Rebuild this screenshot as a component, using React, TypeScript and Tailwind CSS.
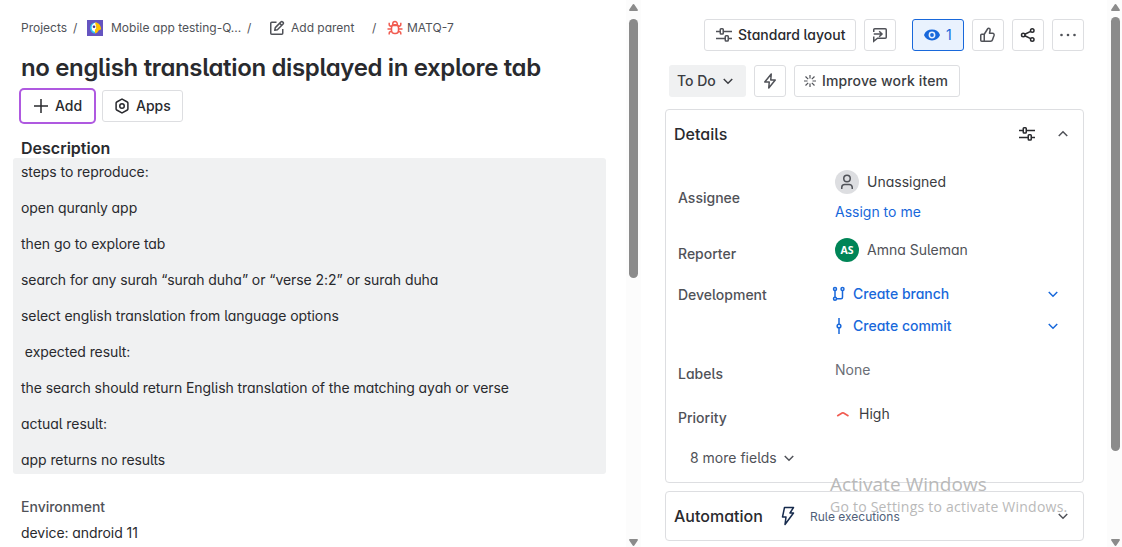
import React from "react";

type IconProps = { className?: string };

const Svg = ({ className = "", children, box = "0 0 16 16" }: IconProps & { children: React.ReactNode; box?: string }) => (
  <svg viewBox={box} fill="none" stroke="currentColor" strokeWidth="1.5" className={`block shrink-0 ${className}`}>
    {children}
  </svg>
);

const Chevron = ({ className = "", up = false }: IconProps & { up?: boolean }) => (
  <Svg box="0 0 12 12" className={`size-3 ${className}`}>
    <path d={up ? "M1.750 8 6 3.750 10.250 8" : "M1.750 4 6 8.250 10.250 4"} />
  </Svg>
);

const Customize = ({ className = "" }: IconProps) => (
  <Svg className={`size-4 ${className}`}>
    <path d="M0 4.500h4M7.250 4.500H16M0 11.500h9M12.250 11.500H16" />
    <rect x="4.250" y="1.750" width="3" height="5.250" rx="0.750" />
    <rect x="9.250" y="8.750" width="3" height="5.250" rx="0.750" />
  </Svg>
);

const Bolt = ({ className = "" }: IconProps) => (
  <Svg className={`size-4 ${className}`}>
    <path d="M9.250 1 2.750 9h4.500L6.750 15l6.500-8h-4.500z" strokeLinejoin="round" />
  </Svg>
);

const ScrollBar = ({ thumb, className = "" }: { thumb: string; className?: string }) => (
  <div className={`flex h-full w-[15px] shrink-0 flex-col items-center bg-[#fcfcfc] pt-1 pb-px ${className}`}>
    <svg viewBox="0 0 9 7" className="block h-[7px] w-[9px]" fill="#8b8b8b"><path d="M4.500 0C5 0 5.200.3 5.500.8L8.700 5.600C9.200 6.400 9 7 8 7H1C0 7-.2 6.400.3 5.600L3.500.8C3.800.3 4 0 4.500 0z" /></svg>
    <div className={`w-[9px] rounded-full bg-[#8b8b8b] ${thumb}`} />
    <svg viewBox="0 0 9 7" className="mt-auto block h-[7px] w-[9px]" fill="#8b8b8b"><path d="M4.500 7C4 7 3.800 6.700 3.500 6.200L.3 1.400C-.2.6 0 0 1 0h7c1 0 1.200.6.7 1.400L5.500 6.200C5.200 6.700 5 7 4.500 7z" /></svg>
  </div>
);

const steps = [
  "steps to reproduce:",
  "open quranly app",
  "then go to explore tab",
  "search for any surah “surah duha” or “verse 2:2” or surah duha",
  "select english translation from language options",
  "\u00a0expected result:",
  "the search should return English translation of the matching ayah or verse",
  "actual result:",
  "app returns no results",
];

const Btn = ({ className = "", border = "border-[#dddee1]", children }: { className?: string; border?: string; children: React.ReactNode }) => (
  <button className={`flex h-8 shrink-0 items-center rounded-[3px] border text-left text-sm font-medium whitespace-nowrap ${border} ${className}`}>
    {children}
  </button>
);

const Field = ({ label, className = "", labelClass = "", children }: { label: string; className?: string; labelClass?: string; children: React.ReactNode }) => (
  <div className={`flex ${className}`}>
    <div className={`w-[157px] shrink-0 font-[450] text-[#505258] ${labelClass}`}>{label}</div>
    <div className="min-w-0 flex-1">{children}</div>
  </div>
);

export default function App() {
  return (
    <div className="relative flex h-[547px] w-[1122px] overflow-hidden bg-white font-['Inter',sans-serif] text-sm leading-5 text-[#292a2e] [font-feature-settings:'cv11','cv05']">
      <main className="flex w-[626px] shrink-0 flex-col pt-[18px]">
        <nav className="flex h-5 items-center pl-[21px] text-xs whitespace-nowrap text-[#505258]">
          <span className="w-[52px]">Projects</span>
          <span className="w-[14px]">/</span>
          <svg viewBox="0 0 16 16" className="block size-4">
            <rect width="16" height="16" fill="#6554c0" />
            <path d="M8.500 2.500a5.500 5.500 0 1 0 0 11z" fill="#2cc7ee" />
            <path d="M4.600 7.800c0-3 2-5 4.900-5v9.400c-3 0-4.900-1.600-4.900-4.400z" fill="#fff" />
            <path d="M8 2.500c3.500 0 5.800 2.500 6.200 6.800L11.500 10.500c-.6 1.600-1.700 2.500-3.500 3V9.500L9.500 8z" fill="#ffc400" />
            <circle cx="7" cy="6.800" r="1.300" fill="#403294" />
          </svg>
          <span className="ml-2 w-[136px]">Mobile app testing-Q...</span>
          <span className="w-[22px]">/</span>
          <Svg className="size-4">
            <path d="M7.500 2.250H2.750a1 1 0 0 0-1 1v10a1 1 0 0 0 1 1h10a1 1 0 0 0 1-1V9" />
            <path d="M5.750 10.250 6.300 7.600 12 1.900a1.100 1.100 0 0 1 1.600 0l.5.5a1.100 1.100 0 0 1 0 1.600L8.400 9.700z" strokeLinejoin="round" />
            <path d="m10.600 3.300 2.100 2.100" />
          </Svg>
          <span className="ml-[6px] w-[81px]">Add parent</span>
          <span className="w-[15px]">/</span>
          <Svg className="size-4 text-[#f15b50]">
            <rect x="4.500" y="4.750" width="7" height="8.750" rx="3" />
            <path d="M4.500 5.500h7M5.750 4.750V3.800a2.250 2.250 0 0 1 4.500 0v.95M4.500 9H.5M11.500 9h4M4.600 6.500 3.200 6a1.500 1.500 0 0 1-1-1.500V2.800M11.400 6.500l1.400-.5a1.500 1.500 0 0 0 1-1.500V2.800M4.700 11.200l-1.500.5a1.500 1.500 0 0 0-1 1.500v1.300M11.300 11.200l1.500.5a1.500 1.500 0 0 1 1 1.500v1.300" />
          </Svg>
          <span className="ml-1">MATQ-7</span>
        </nav>
        <h1 className="mt-4 pl-[21px] text-2xl leading-7 font-semibold tracking-[-0.36px] whitespace-nowrap">no english translation displayed in explore tab</h1>
        <div className="mt-2 flex gap-2 pl-[21px]">
          <Btn border="border-transparent" className="w-[73px] pl-[11px] ring-2 ring-[#af59e0]">
            <Svg className="size-4"><path d="M8 1v14M1 8h14" /></Svg>
            <span className="ml-[6px] font-[450]">Add</span>
          </Btn>
          <Btn className="w-[81px] pl-[11px]">
            <Svg className="size-4">
              <path d="M7.400 1.300a1.200 1.200 0 0 1 1.200 0l4.700 2.700c.4.200.6.600.6 1v6c0 .4-.2.800-.6 1l-4.700 2.700a1.200 1.200 0 0 1-1.200 0L2.700 12c-.4-.2-.6-.6-.6-1V5c0-.4.200-.8.600-1z" />
              <circle cx="8" cy="8" r="2.250" />
            </Svg>
            <span className="ml-[6px] font-[450]">Apps</span>
          </Btn>
        </div>
        <h2 className="mt-4 pl-[21px] text-base leading-5 font-semibold">Description</h2>
        <div className="ml-[13px] flex h-[316px] w-[593px] flex-col gap-4 rounded-[3px] bg-[#f0f1f2] px-2 pt-1 tracking-[-0.065px]">
          {steps.map((s) => <p key={s} className="whitespace-nowrap">{s}</p>)}
        </div>
        <h3 className="mt-[23px] pl-[21px] font-[450] text-[#505258]">Environment</h3>
        <p className="mt-[6px] pl-[21px] tracking-[-0.065px]">device: android 11</p>
      </main>
      <ScrollBar thumb="mt-2 h-[259px]" />
      <aside className="flex w-[466px] shrink-0 flex-col pt-[19px] pl-6">
        <div className="flex h-8 pl-[39px]">
          <Btn className="w-[152px] pl-[11px]">
            <Customize className="text-[#505258]" />
            <span className="ml-[6px] font-[450]">Standard layout</span>
          </Btn>
          <Btn className="ml-2 w-8 justify-center text-[#505258]">
            <Svg className="size-4">
              <path d="M1.750 5V2.750a1 1 0 0 1 1-1h10.500a1 1 0 0 1 1 1v7.500a1 1 0 0 1-1 1H5.500l-3.750 3V9.500M1.750 7h8M7.200 4.250 10 7l-2.800 2.750" />
            </Svg>
          </Btn>
          <Btn border="border-[#1868db]" className="ml-4 w-[52px] bg-[#e9f2fe] pl-[11px] text-[#1868db]">
            <svg viewBox="0 0 16 16" className="block size-4" fill="currentColor">
              <path fillRule="evenodd" d="M8 2.500C4.200 2.500 1.400 4.600.3 7.200a2 2 0 0 0 0 1.600C1.400 11.400 4.200 13.500 8 13.500s6.600-2.100 7.700-4.700a2 2 0 0 0 0-1.600C14.600 4.600 11.800 2.500 8 2.500m0 2.100a3.400 3.400 0 1 1 0 6.800 3.400 3.400 0 0 1 0-6.800" />
              <circle cx="8" cy="8" r="1.900" />
            </svg>
            <span className="ml-[6px] font-normal">1</span>
          </Btn>
          <Btn className="ml-2 w-8 justify-center text-[#505258]">
            <Svg className="size-4">
              <path d="M4.250 7.250H1.750a1 1 0 0 0-1 1v5a1 1 0 0 0 1 1h8.800a2 2 0 0 0 1.950-1.500l1.600-4.600a1.500 1.500 0 0 0-1.450-1.900H9.500l.6-3.100c.2-1.100-.6-1.900-1.500-1.900-.4 0-.7.200-.9.500zv7" strokeLinejoin="round" />
            </Svg>
          </Btn>
          <Btn className="ml-2 w-8 justify-center">
            <Svg className="size-4">
              <circle cx="3.250" cy="8" r="1.750" /><circle cx="12.250" cy="3.600" r="1.750" /><circle cx="12.250" cy="12.400" r="1.750" />
              <path d="m4.800 7.200 5.900-2.800M4.800 8.800l5.900 2.800" />
            </Svg>
          </Btn>
          <Btn className="ml-2 w-8 justify-center text-[#505258]">
            <svg viewBox="0 0 16 16" className="block size-4" fill="currentColor">
              <circle cx="1.500" cy="8" r="1.300" /><circle cx="8" cy="8" r="1.300" /><circle cx="14.500" cy="8" r="1.300" />
            </svg>
          </Btn>
        </div>
        <div className="mt-[14px] flex h-8 gap-2 pl-1">
          <Btn border="border-transparent" className="w-[77px] bg-[#f0f1f2] pl-[7px] text-[#3b3d42]">
            <span className="w-[45px]">To Do</span><Chevron />
          </Btn>
          <Btn className="w-8 justify-center text-[#505258]"><Bolt /></Btn>
          <Btn className="w-[166px] pl-[7px] text-[#3b3d42]">
            <Svg className="size-4 text-[#505258]">
              <g strokeWidth="1.200"><path d="M8 2v3.500M8 10.500V14M2 8h3.500M10.500 8H14M3.500 3.500l2.700 2.700M9.800 9.800l2.700 2.700M12.500 3.500 9.800 6.200M6.200 9.800l-2.700 2.700" /></g>
            </Svg>
            <span className="ml-1 tracking-[0.14px]">Improve work item</span>
          </Btn>
        </div>
        <section className="mt-3 flex h-[374px] w-[419px] flex-col rounded-[4px] border border-[#dddee1]">
          <header className="flex h-12 items-center pl-2">
            <h2 className="w-[345px] text-base font-medium">Details</h2>
            <Customize />
            <Chevron up className="ml-[22px] text-[#505258]" />
          </header>
          <div className="flex flex-col pl-3">
            <Field label="Assignee" labelClass="pt-[30px]" className="h-[78px]">
              <div className="flex items-center gap-2 pt-[12px]">
                <span className="flex size-6 items-center justify-center rounded-full bg-[#dddee1] text-[#505258]">
                  <Svg className="size-4"><circle cx="8" cy="4.500" r="3.250" /><path d="M2.750 15v-1.500a3 3 0 0 1 3-3h4.500a3 3 0 0 1 3 3V15" /></Svg>
                </span>
                <span className="text-[#3b3d42]">Unassigned</span>
              </div>
              <a className="mt-2 block text-[#1868db]">Assign to me</a>
            </Field>
            <Field label="Reporter" labelClass="pt-[8px]" className="h-[47px]">
              <div className="flex items-center gap-2 pt-0.5">
                <span className="flex size-6 items-center justify-center rounded-full bg-[#008557] font-['Noto_Sans',sans-serif] text-[10.5px] font-bold text-white">AS</span>
                <span className="text-[#505258]">Amna Suleman</span>
              </div>
            </Field>
            <Field label="Development" labelClass="pt-[2px]" className="h-[76px]">
              <div className="flex h-[22px] items-center font-medium text-[#1868db]">
                <Svg className="-ml-1 size-4">
                  <circle cx="4" cy="3" r="1.500" /><circle cx="11.500" cy="3" r="1.500" /><circle cx="4" cy="12.750" r="1.500" />
                  <path d="M4 4.500v6.750M5.500 12.750h4.500a1.500 1.500 0 0 0 1.500-1.500V4.500" />
                </Svg>
                <span className="ml-[6px] w-[194px]">Create branch</span><Chevron />
              </div>
              <div className="mt-[10px] flex h-[22px] items-center font-medium text-[#1868db]">
                <Svg className="-ml-1 size-4"><circle cx="8" cy="8" r="1.850" /><path d="M8 0v6.150M8 9.850V16" /></Svg>
                <span className="ml-[6px] w-[194px]">Create commit</span><Chevron />
              </div>
            </Field>
            <Field label="Labels" labelClass="pt-[5px]" className="h-11">
              <div className="pt-px text-[#6b6e76]">None</div>
            </Field>
            <Field label="Priority" labelClass="pt-[5px]" className="h-10">
              <div className="flex items-center pt-px">
                <Svg className="size-4 text-[#f15b50]"><path strokeWidth="1.700" d="m2.200 10 4.900-2.900a1.500 1.500 0 0 1 1.500 0L13.500 10" /></Svg>
                <span className="ml-2 text-[#3b3d42]">High</span>
              </div>
            </Field>
            <div className="mt-[5px] flex items-center pl-3 text-[#505258]">
              <span className="w-[93px]">8 more fields</span><Chevron />
            </div>
          </div>
        </section>
        <section className="mt-2 flex h-[50px] w-[419px] items-center rounded-[4px] border border-[#dddee1] pl-2">
          <h2 className="w-[106px] text-base font-medium">Automation</h2>
          <svg viewBox="0 0 16 20" className="block h-5 w-4 shrink-0" fill="none" stroke="#172b4d" strokeWidth="1.500"><path d="M4.500 1.500h9L10 7h3.500L5 18.500l1-7.500H2.500z" strokeLinejoin="round" /></svg>
          <span className="ml-[14px] w-[247px] pt-px text-xs text-[#505f79]">Rule executions</span>
          <Chevron className="text-[#505258]" />
        </section>
      </aside>
      <ScrollBar className="pl-px" thumb="mt-[6px] h-[434px]" />
      <div className="pointer-events-none absolute top-[470px] left-[830px] font-['Open_Sans',sans-serif] whitespace-nowrap text-[#b9b9b9]">
        <div className="text-[19px] leading-7 tracking-[0.06px]">Activate Windows</div>
        <div className="text-sm leading-[18px] tracking-[0.23px]">Go to Settings to activate Windows.</div>
      </div>
    </div>
  );
}
